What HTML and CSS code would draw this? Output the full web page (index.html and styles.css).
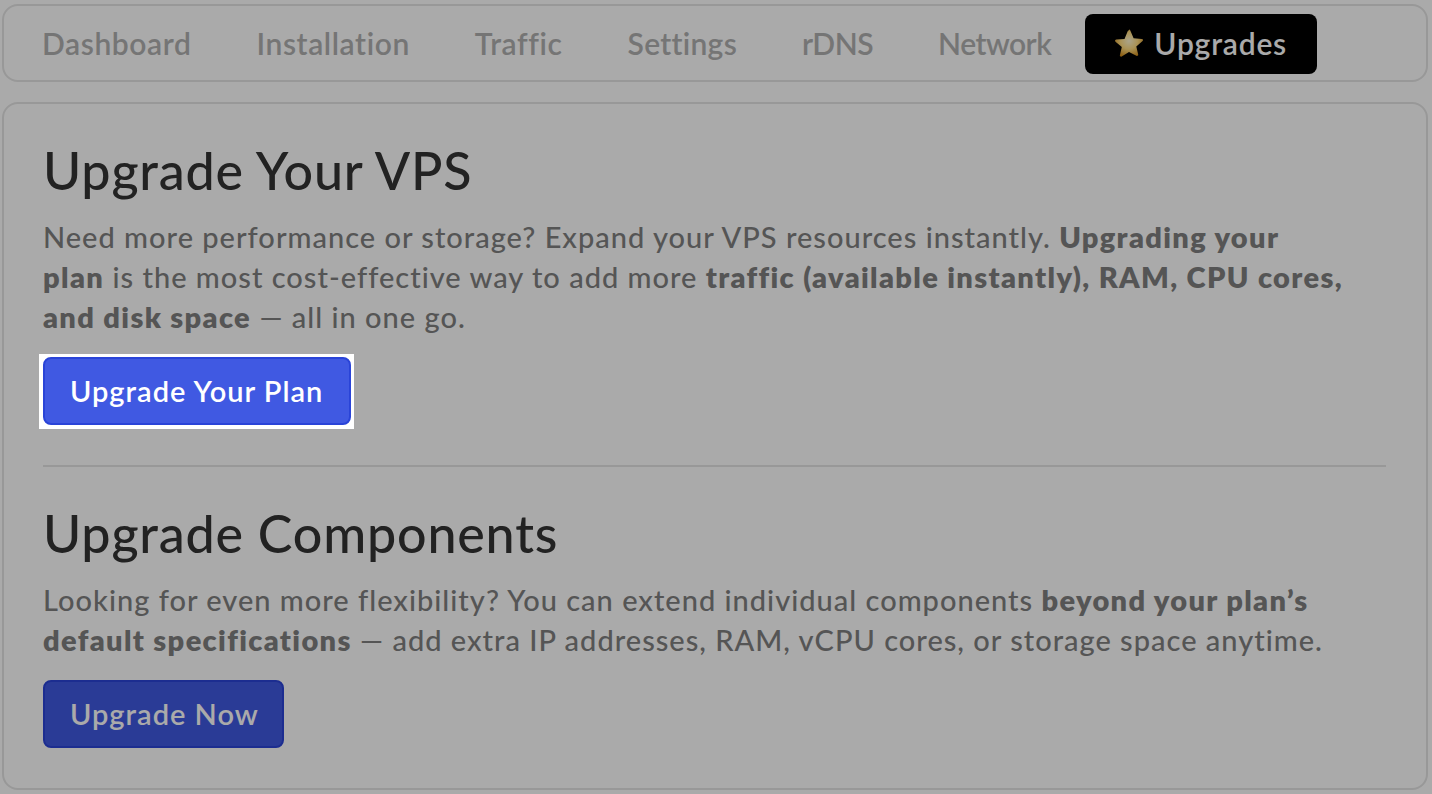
FILE: index.html
```html
<!DOCTYPE html>
<html lang="en">
<head>
<meta charset="utf-8">
<title>Upgrades</title>
<link rel="stylesheet" href="styles.css">
</head>
<body>
<nav class="tabs">
  <a class="tab">Dashboard</a>
  <a class="tab">Installation</a>
  <a class="tab">Traffic</a>
  <a class="tab tab-snug">Settings</a>
  <a class="tab tab-tight">rDNS</a>
  <a class="tab tab-tight">Network</a>
  <a class="tab tab-active">
    <svg class="star" viewBox="0 0 28 28" aria-hidden="true">
      <defs><radialGradient id="g" cx=".5" cy=".42" r=".62"><stop offset="0" stop-color="#fff6d0"/><stop offset=".5" stop-color="#ffdc80"/><stop offset="1" stop-color="#cf8a18"/></radialGradient></defs>
      <path d="M14 .5c.6 0 1.100.4 1.300.9l3.300 7.800 8.300.7c1.100.1 1.500 1.400.7 2.100l-6.300 5.400 1.900 8.100c.3 1.100-.9 1.900-1.800 1.300L14 23.100l-7.300 4.400c-.9.600-2.100-.2-1.800-1.300l1.900-8.100-6.300-5.400c-.8-.7-.4-2 .7-2.100l8.300-.7 3.300-7.800c.2-.5.700-.9 1.300-.9z" fill="url(#g)"/>
    </svg>
    Upgrades
  </a>
</nav>
<main class="card">
  <h2 class="title">Upgrade Your VPS</h2>
  <p class="text">Need more performance or storage? Expand your VPS resources instantly. <b>Upgrading your<br>plan</b> is the most cost-effective way to add more <b>traffic (available instantly), RAM, CPU cores,<br>and disk space</b> — all in one go.</p>
  <div class="spot"><a class="btn">Upgrade Your Plan</a></div>
  <hr class="rule">
  <h2 class="title">Upgrade Components</h2>
  <p class="text">Looking for even more flexibility? You can extend individual components <b>beyond your plan’s<br>default specifications</b> — add extra IP addresses, RAM, vCPU cores, or storage space anytime.</p>
  <a class="btn btn-compact">Upgrade Now</a>
</main>
<div class="overlay"></div>
</body>
</html>
```
FILE: styles.css
```css
* { box-sizing: border-box; }
html, body { height: 100%; }
body {
  margin: 0;
  padding: 4px 4px 0 2px;
  background: #fff;
  font-family: "Lato", sans-serif;
  overflow: hidden;
}
.tabs {
  display: flex;
  align-items: center;
  gap: 1px;
  height: 78px;
  padding: 2px 6px 0;
  border: 2px solid #e5e5e5;
  border-radius: 16px;
}
.tab {
  display: flex;
  align-items: center;
  height: 60px;
  padding: 0 32px 2px;
  border-radius: 8px;
  font-size: 30px;
  font-weight: 600;
  letter-spacing: .6px;
  color: #b0b0b0;
}
.tab-snug { letter-spacing: .3px; }
.tab-tight { letter-spacing: -.5px; }
.tab-active { gap: 11px; margin-left: 1px; background: #000; color: #fff; padding: 0 30px 2px; letter-spacing: .8px; }
.star { width: 28px; height: 28px; }
.card {
  margin-top: 20px;
  height: 688px;
  padding: 36px 40px 0 39px;
  border: 2px solid #e5e5e5;
  border-radius: 16px;
}
.title {
  margin: 0;
  font-size: 52px;
  line-height: 60px;
  font-weight: 500;
  letter-spacing: .8px;
  color: #333;
}
.text {
  margin: 17px 0 20px;
  font-size: 29px;
  line-height: 40px;
  letter-spacing: 1px;
  font-weight: 500;
  color: #808080;
  white-space: nowrap;
}
.text b { font-weight: 800; letter-spacing: 1.35px; }
.spot {
  position: relative;
  z-index: 10;
  width: fit-content;
  margin: -3px -3px -4px -4px;
  padding: 3px 3px 4px 4px;
  background: #fff;
}
.btn {
  display: block;
  width: fit-content;
  padding: 0 26px 0 25px;
  height: 68px;
  line-height: 64px;
  border: 2px solid #2a44d8;
  border-radius: 8px;
  background: #4059e2;
  color: #fff;
  font-size: 29px;
  font-weight: 600;
  letter-spacing: 1px;
}
.btn-compact { padding-right: 23px; }
.rule { margin: 40px 0 36px; border: 0; border-top: 2px solid #e5e5e5; }
.overlay {
  position: fixed;
  inset: 0;
  background: rgba(0, 0, 0, .333);
}
```
